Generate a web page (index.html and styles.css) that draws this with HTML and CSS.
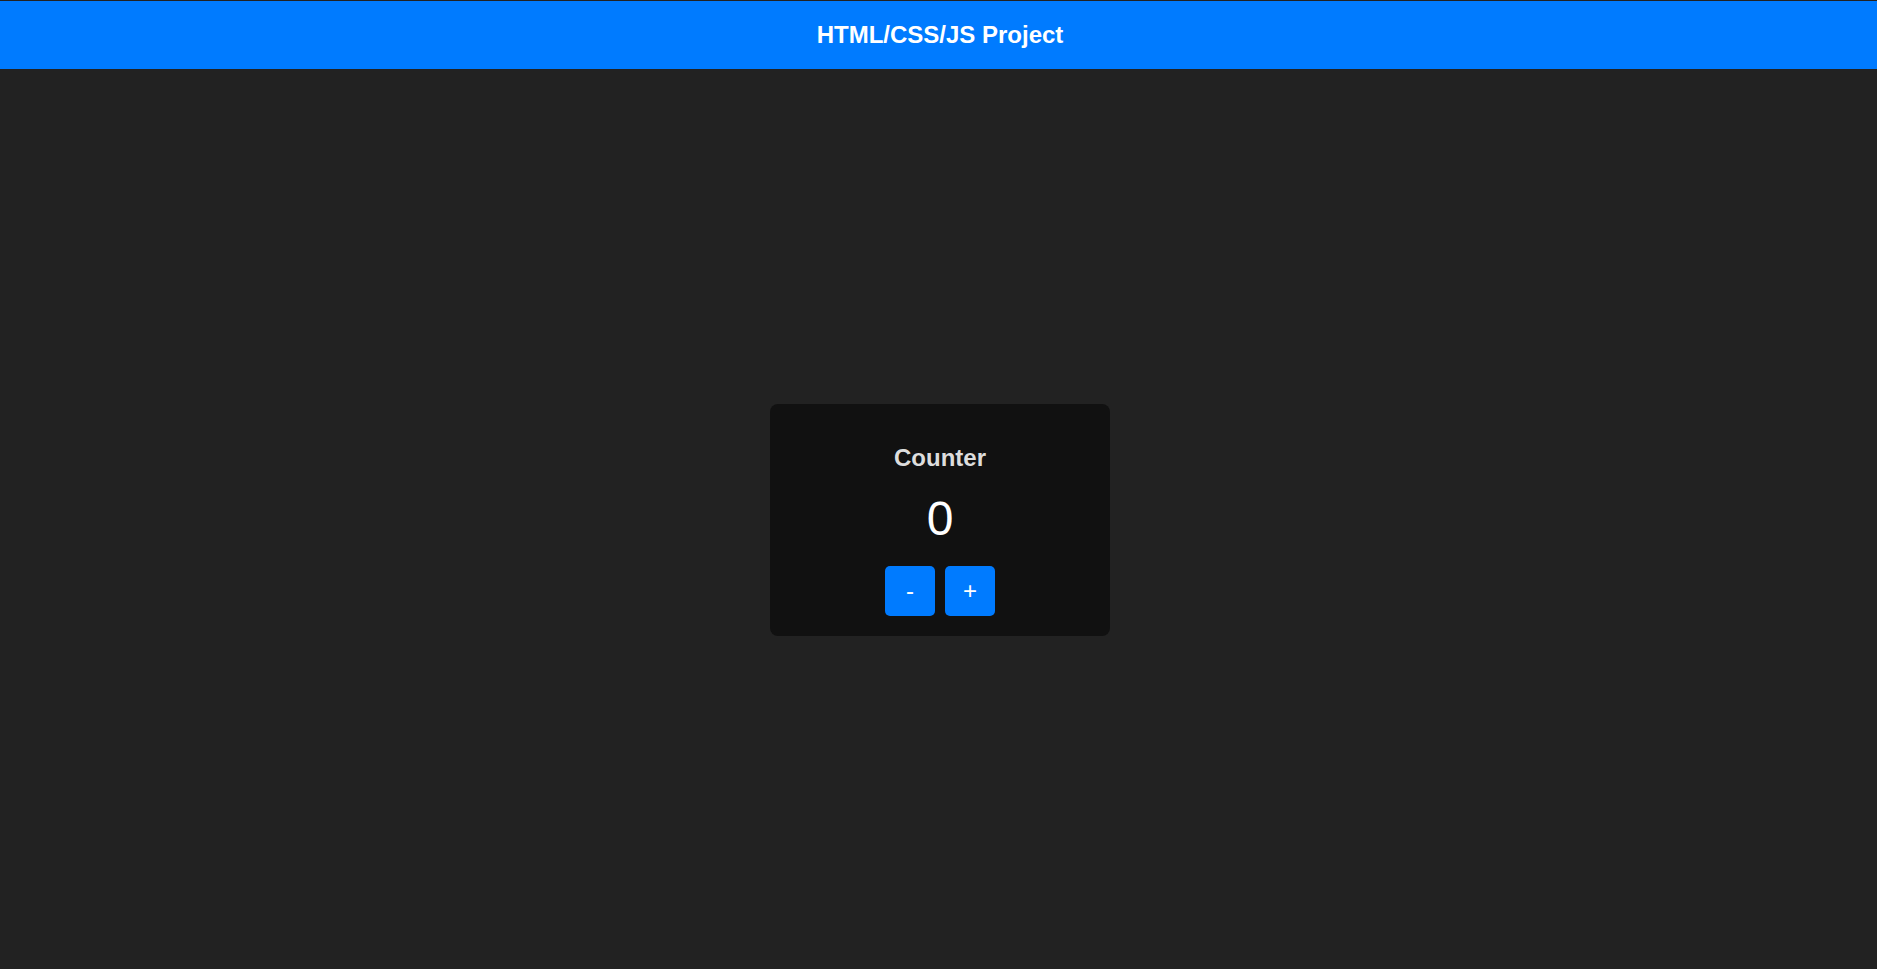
FILE: index.html
```html
<!DOCTYPE html>
<html lang="en">
<head>
<meta charset="UTF-8">
<title>HTML/CSS/JS Project</title>
<link rel="stylesheet" href="styles.css">
</head>
<body>
<header class="site-header">
  <h1 class="site-title">HTML/CSS/JS Project</h1>
</header>
<main class="main">
  <section class="card">
    <h2 class="card-title">Counter</h2>
    <div class="count">0</div>
    <div class="controls">
      <button class="btn" type="button">-</button>
      <button class="btn" type="button">+</button>
    </div>
  </section>
</main>
</body>
</html>
```
FILE: styles.css
```css
html, body {
  height: 100%;
}
body {
  margin: 0;
  padding-top: 1px;
  box-sizing: border-box;
  background: #222222;
  color: #ffffff;
  font-family: "Liberation Sans", Arial, sans-serif;
  display: flex;
  flex-direction: column;
}
.site-header {
  background: #007bff;
  padding: 20px 20px 20px 23px;
  text-align: center;
}
.site-title {
  margin: 0;
  font-size: 24px;
  font-weight: bold;
  line-height: normal;
  color: #ffffff;
}
.main {
  flex: 1;
  display: flex;
  align-items: center;
  justify-content: center;
  padding-left: 3px;
  padding-top: 2px;
}
.card {
  width: 300px;
  padding: 20px;
  background: #111111;
  border-radius: 8px;
  text-align: center;
}
.card-title {
  font-size: 24px;
  margin: 19.92px 0;
  color: #dddddd;
}
.count {
  font-size: 48px;
  color: #ffffff;
}
.controls {
  margin-top: 20px;
  display: flex;
  justify-content: center;
  gap: 10px;
}
.btn {
  width: 50px;
  height: 50px;
  padding: 0;
  border: none;
  border-radius: 5px;
  background: #007bff;
  color: #ffffff;
  font-family: "Liberation Sans", Arial, sans-serif;
  font-size: 24px;
  cursor: pointer;
}
```
